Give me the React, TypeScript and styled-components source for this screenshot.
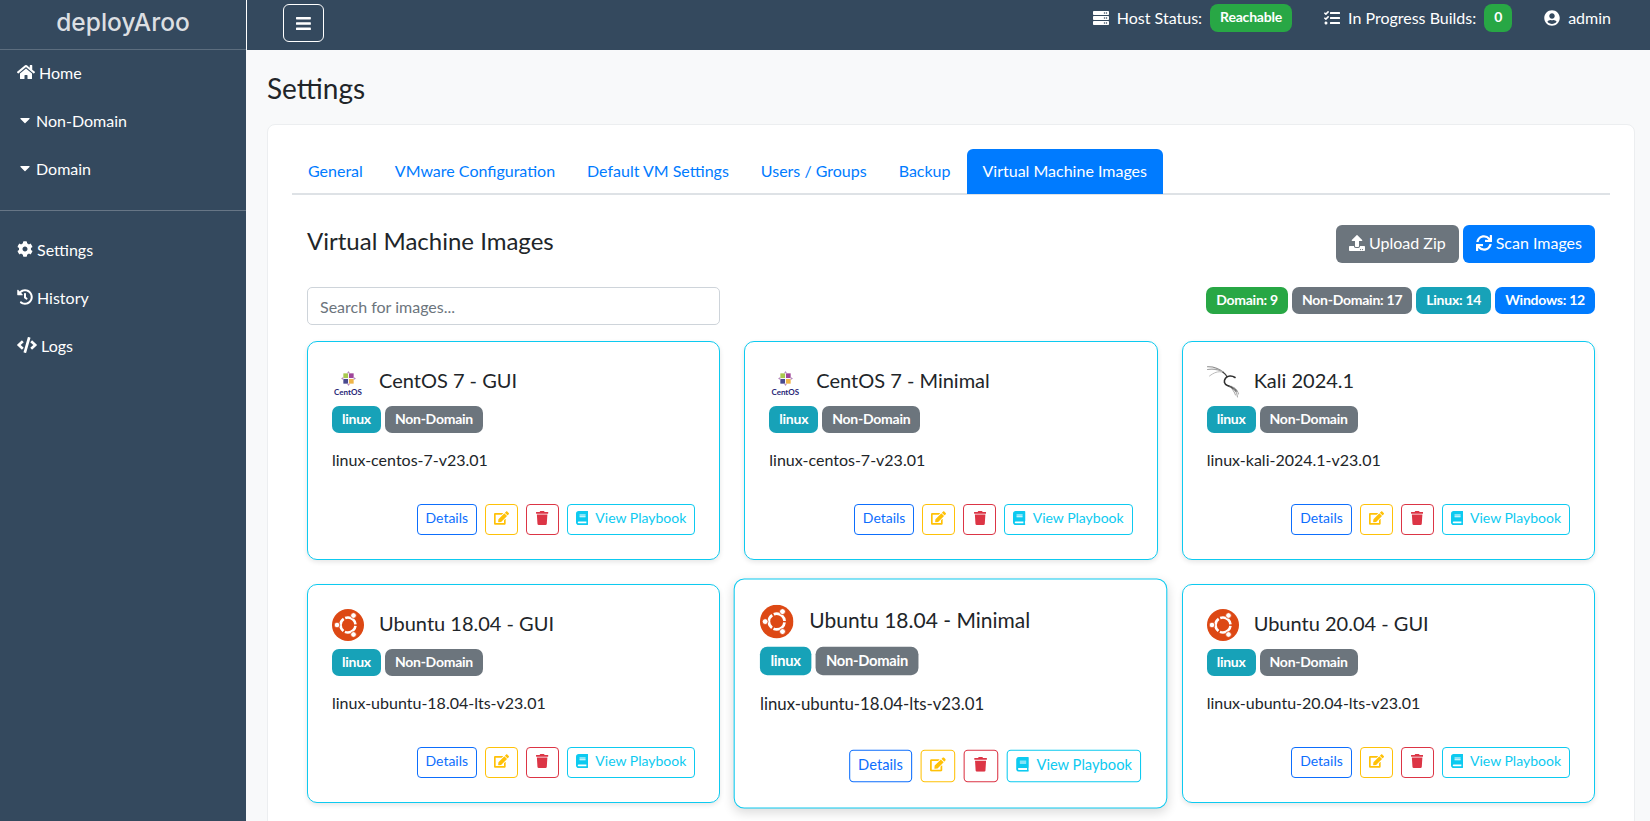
import React from 'react'
import styled, { createGlobalStyle } from 'styled-components'
import {
  FaBars,
  FaBook,
  FaCaretDown,
  FaCode,
  FaCog,
  FaEdit,
  FaHistory,
  FaHome,
  FaServer,
  FaSync,
  FaTasks,
  FaTrash,
  FaUpload,
  FaUserCircle
} from 'react-icons/fa'

type Tone = 'success' | 'secondary' | 'info' | 'primary'
type LineTone = 'blue' | 'amber' | 'red' | 'cyan'
type Os = 'centos' | 'kali' | 'ubuntu'

const toneColors: Record<Tone, string> = {
  success: '#28a745',
  secondary: '#6c757d',
  info: '#17a2b8',
  primary: '#007bff'
}

const lineColors: Record<LineTone, string> = {
  blue: '#0d6efd',
  amber: '#ffc107',
  red: '#dc3545',
  cyan: '#0dcaf0'
}

const tabs = ['General', 'VMware Configuration', 'Default VM Settings', 'Users / Groups', 'Backup', 'Virtual Machine Images']

const counts: { label: string; tone: Tone }[] = [
  { label: 'Domain: 9', tone: 'success' },
  { label: 'Non-Domain: 17', tone: 'secondary' },
  { label: 'Linux: 14', tone: 'info' },
  { label: 'Windows: 12', tone: 'primary' }
]

const images: { id: string; title: string; file: string; os: Os; hovered?: boolean }[] = [
  { id: '1', title: 'CentOS 7 - GUI', file: 'linux-centos-7-v23.01', os: 'centos' },
  { id: '2', title: 'CentOS 7 - Minimal', file: 'linux-centos-7-v23.01', os: 'centos' },
  { id: '3', title: 'Kali 2024.1', file: 'linux-kali-2024.1-v23.01', os: 'kali' },
  { id: '4', title: 'Ubuntu 18.04 - GUI', file: 'linux-ubuntu-18.04-lts-v23.01', os: 'ubuntu' },
  { id: '5', title: 'Ubuntu 18.04 - Minimal', file: 'linux-ubuntu-18.04-lts-v23.01', os: 'ubuntu', hovered: true },
  { id: '6', title: 'Ubuntu 20.04 - GUI', file: 'linux-ubuntu-20.04-lts-v23.01', os: 'ubuntu' }
]

const CentosLogo = () => (
  <CentosMark>
    <svg width="15" height="15" viewBox="0 0 16 16">
      <rect x="2.5" y="2.5" width="5" height="5" fill="#a9c94f" />
      <rect x="8.5" y="2.5" width="5" height="5" fill="#a0459a" />
      <rect x="2.5" y="8.5" width="5" height="5" fill="#4a4a8f" />
      <rect x="8.5" y="8.5" width="5" height="5" fill="#efb548" />
      <path d="M8 0l1.6 2.5H6.4zM8 16l-1.6-2.5h3.2zM0 8l2.5-1.6v3.2zM16 8l-2.5 1.6V6.4z" fill="#b78cbd" />
    </svg>
    <CentosName>CentOS</CentosName>
  </CentosMark>
)

const KaliLogo = () => (
  <svg width="32" height="32" viewBox="0 0 32 32" fill="none" strokeLinecap="round">
    <path d="M0.5 0.8C7 0.6 12 2.5 16.5 6.5" stroke="#8a8a8a" strokeWidth="1.1" />
    <path d="M0.5 3.5C7 2.5 12 3.5 16.5 6.5" stroke="#a5a5a5" strokeWidth="1.1" />
    <path d="M2.5 10C7 6.5 11 5 15.5 6" stroke="#bcbcbc" strokeWidth="1" />
    <path d="M16 6.2C18 7.5 19.5 9.5 20 11" stroke="#3f3f3f" strokeWidth="1.3" />
    <path d="M28 11.5C25 9.3 20.5 9.5 18.5 12.2C16.5 15 17 18 20.5 19.5C24.5 21 27.5 22.5 29 25" stroke="#2f2f2f" strokeWidth="1.6" />
    <path d="M25 20.5C28 23 30 26.5 30.5 31M27 21.5C29.5 23 31 25.5 31.5 28M23 20.5C26 24 27.5 26 28.5 29" stroke="#999" strokeWidth="0.9" />
  </svg>
)

const UbuntuLogo = () => (
  <svg width="32" height="32" viewBox="0 0 32 32">
    <circle cx="16" cy="16" r="16" fill="#dd4814" />
    <circle cx="16" cy="16" r="7.5" fill="none" stroke="#fff" strokeWidth="2.6" strokeDasharray="14 1.7" strokeDashoffset="-0.85" />
    <circle cx="5" cy="16" r="2.8" fill="#fff" stroke="#dd4814" strokeWidth="0.8" />
    <circle cx="21.5" cy="6.5" r="2.8" fill="#fff" stroke="#dd4814" strokeWidth="0.8" />
    <circle cx="21.5" cy="25.5" r="2.8" fill="#fff" stroke="#dd4814" strokeWidth="0.8" />
  </svg>
)

const osLogos: Record<Os, React.ReactNode> = {
  centos: <CentosLogo />,
  kali: <KaliLogo />,
  ubuntu: <UbuntuLogo />
}

const App: React.FC = () => {
  return (
    <Shell>
      <GlobalStyle />
      <Sidebar>
        <Brand>deployAroo</Brand>
        <NavList>
          <NavItem><HomeIcon />Home</NavItem>
          <NavItem $group><CaretIcon />Non-Domain</NavItem>
          <NavItem $group><CaretIcon />Domain</NavItem>
        </NavList>
        <NavDivider />
        <NavList>
          <NavItem><FaCog />Settings</NavItem>
          <NavItem><FaHistory />History</NavItem>
          <NavItem><CodeIcon />Logs</NavItem>
        </NavList>
      </Sidebar>
      <Main>
        <Topbar>
          <MenuButton aria-label="Toggle sidebar"><BarsIcon /></MenuButton>
          <TopStatus>
            <StatusItem>
              <FaServer />
              <StatusLabel>Host Status:</StatusLabel>
              <StatusPill>Reachable</StatusPill>
            </StatusItem>
            <StatusItem>
              <FaTasks />
              <StatusLabel>In Progress Builds:</StatusLabel>
              <StatusPill>0</StatusPill>
            </StatusItem>
            <StatusItem>
              <FaUserCircle />
              <StatusLabel>admin</StatusLabel>
            </StatusItem>
          </TopStatus>
        </Topbar>
        <Content>
          <PageTitle>Settings</PageTitle>
          <Panel>
            <TabBar>
              {tabs.map((tab) => (
                <Tab key={tab} $active={tab === 'Virtual Machine Images'}>{tab}</Tab>
              ))}
            </TabBar>
            <TabBody>
              <SectionHeader>
                <SectionTitle>Virtual Machine Images</SectionTitle>
                <ButtonRow>
                  <SolidButton $tone="secondary"><FaUpload />Upload Zip</SolidButton>
                  <SolidButton $tone="primary"><FaSync />Scan Images</SolidButton>
                </ButtonRow>
              </SectionHeader>
              <FilterRow>
                <SearchInput placeholder="Search for images..." />
                <CountRow>
                  {counts.map((count) => (
                    <Badge key={count.label} $tone={count.tone}>{count.label}</Badge>
                  ))}
                </CountRow>
              </FilterRow>
              <CardGrid>
                {images.map((image) => (
                  <Card key={image.id} $hovered={image.hovered}>
                    <CardHead>
                      <LogoBox>{osLogos[image.os]}</LogoBox>
                      <CardTitle>{image.title}</CardTitle>
                    </CardHead>
                    <TagRow>
                      <Badge $tone="info">linux</Badge>
                      <Badge $tone="secondary">Non-Domain</Badge>
                    </TagRow>
                    <FileName>{image.file}</FileName>
                    <CardActions>
                      <LineButton $tone="blue">Details</LineButton>
                      <LineButton $tone="amber" aria-label="Edit"><EditIcon /></LineButton>
                      <LineButton $tone="red" aria-label="Delete"><TrashIcon /></LineButton>
                      <LineButton $tone="cyan"><BookIcon />View Playbook</LineButton>
                    </CardActions>
                  </Card>
                ))}
              </CardGrid>
            </TabBody>
          </Panel>
        </Content>
      </Main>
    </Shell>
  )
}

export default App

const GlobalStyle = createGlobalStyle`
  * {
    box-sizing: border-box;
  }
  html, body {
    margin: 0;
    height: 100%;
    overflow: hidden;
  }
  body {
    font-family: Lato, "Liberation Sans", sans-serif;
    font-size: 16px;
    color: #212529;
    background: #f8f9fa;
  }
`

// react-icons renders every glyph 1em square, these keep the font-awesome proportions
const HomeIcon = styled(FaHome)`
  width: 1.125em;
`
const CaretIcon = styled(FaCaretDown)`
  width: 0.625em;
`
const CodeIcon = styled(FaCode)`
  width: 1.25em;
`
const BarsIcon = styled(FaBars)`
  width: 0.875em;
`
const EditIcon = styled(FaEdit)`
  width: 15px;
`
const TrashIcon = styled(FaTrash)`
  width: 0.875em;
`
const BookIcon = styled(FaBook)`
  width: 0.875em;
`

const Shell = styled.div`
  display: flex;
  height: 100vh;
  overflow: hidden;
`

const Sidebar = styled.aside`
  flex: 0 0 246px;
  background: #34495e;
  color: #fff;
`

const Brand = styled.div`
  height: 50px;
  display: flex;
  align-items: center;
  justify-content: center;
  padding-bottom: 6px;
  font-family: Inter, Lato, sans-serif;
  font-size: 24.5px;
  font-weight: 500;
  color: #dcdfe2;
  border-bottom: 1px solid rgba(255, 255, 255, 0.2);
`

const NavList = styled.nav`
  display: flex;
  flex-direction: column;
`

const NavItem = styled.a<{ $group?: boolean }>`
  height: 48px;
  display: flex;
  align-items: center;
  gap: ${(p) => (p.$group ? '6px' : '4px')};
  padding-left: ${(p) => (p.$group ? '20px' : '17px')};
  padding-bottom: 4px;
  color: #fff;
  svg {
    flex: none;
  }
`

const NavDivider = styled.hr`
  margin: 16px 0;
  border: 0;
  border-top: 1px solid rgba(255, 255, 255, 0.25);
`

const Main = styled.div`
  flex: 1;
  min-width: 0;
  display: flex;
  flex-direction: column;
`

const Topbar = styled.header`
  flex: 0 0 50px;
  display: flex;
  align-items: flex-start;
  justify-content: space-between;
  padding: 4px 39px 0 36px;
  background: #34495e;
  border-left: 1px solid #fff;
`

const MenuButton = styled.button`
  width: 41px;
  height: 38px;
  display: flex;
  align-items: center;
  justify-content: center;
  padding: 0;
  color: #fff;
  font-size: 17px;
  background: transparent;
  border: 1px solid #fff;
  border-radius: 6px;
`

const TopStatus = styled.div`
  display: flex;
  align-items: center;
  gap: 32px;
`

const StatusItem = styled.div`
  display: flex;
  align-items: center;
  height: 28px;
  gap: 8px;
  color: #fff;
  svg {
    flex: none;
  }
`

const StatusLabel = styled.span`
  padding-bottom: 2px;
`

const StatusPill = styled.span`
  height: 28px;
  display: flex;
  align-items: center;
  padding: 0 10px 3px;
  font-size: 14px;
  font-weight: 700;
  letter-spacing: -0.2px;
  color: #fff;
  background: #28a745;
  border-radius: 8px;
`

const Content = styled.main`
  flex: 1;
  padding: 0 15px 24px 21px;
`

const PageTitle = styled.h1`
  margin: 20px 0 17px;
  font-size: 28px;
  line-height: 37px;
  font-weight: 400;
`

const Panel = styled.section`
  padding: 24px;
  background: #fff;
  border: 1px solid #eceef0;
  border-radius: 8px;
`

const TabBar = styled.div`
  display: flex;
  height: 46px;
  border-bottom: 2px solid #dee2e6;
`

const Tab = styled.a<{ $active?: boolean }>`
  height: 45px;
  padding: 10px 16px;
  line-height: 23px;
  color: ${(p) => (p.$active ? '#fff' : '#007bff')};
  background: ${(p) => (p.$active ? '#007bff' : 'transparent')};
  border-radius: 6px 6px 0 0;
`

const TabBody = styled.div`
  padding: 30px 15px 0;
`

const SectionHeader = styled.div`
  display: flex;
  align-items: center;
  justify-content: space-between;
`

const SectionTitle = styled.h2`
  margin: 0;
  padding-bottom: 6px;
  font-size: 24px;
  line-height: 32px;
  font-weight: 400;
`

const ButtonRow = styled.div`
  display: flex;
  gap: 4px;
`

const SolidButton = styled.button<{ $tone: Tone }>`
  height: 38px;
  display: flex;
  align-items: center;
  gap: 4px;
  padding: 0 13px 3px;
  font: inherit;
  color: #fff;
  background: ${(p) => toneColors[p.$tone]};
  border: 0;
  border-radius: 6px;
`

const FilterRow = styled.div`
  display: flex;
  align-items: flex-start;
  justify-content: space-between;
  margin-top: 24px;
`

const SearchInput = styled.input`
  width: 413px;
  height: 38px;
  padding: 6px 12px;
  font: inherit;
  color: #495057;
  background: #fff;
  border: 1px solid #ced4da;
  border-radius: 5px;
  &::placeholder {
    color: #6c757d;
    opacity: 1;
  }
`

const CountRow = styled.div`
  display: flex;
  gap: 4px;
`

const Badge = styled.span<{ $tone: Tone }>`
  height: 27px;
  display: inline-flex;
  align-items: center;
  padding: 0 10px 3px;
  font-size: 14px;
  font-weight: 700;
  letter-spacing: -0.25px;
  color: #fff;
  background: ${(p) => toneColors[p.$tone]};
  border-radius: 7px;
`

const CardGrid = styled.div`
  display: grid;
  grid-template-columns: repeat(3, 1fr);
  gap: 24px;
  margin-top: 16px;
`

const Card = styled.article<{ $hovered?: boolean }>`
  height: 219px;
  padding: 24px;
  background: #fff;
  border: 1px solid #0dcaf0;
  border-radius: 10px;
  box-shadow: ${(p) => (p.$hovered ? '0 4px 10px rgba(0, 0, 0, 0.14)' : '0 2px 5px rgba(0, 0, 0, 0.1)')};
  transform: ${(p) => (p.$hovered ? 'scale(1.05)' : 'none')};
`

const CardHead = styled.div`
  display: flex;
  align-items: center;
  gap: 15px;
  height: 32px;
`

const LogoBox = styled.div`
  flex: 0 0 32px;
  height: 32px;
  svg {
    display: block;
  }
`

const CentosMark = styled.div`
  display: flex;
  flex-direction: column;
  align-items: center;
  padding-top: 5px;
`

const CentosName = styled.span`
  margin-top: 2px;
  font-size: 8px;
  line-height: 8px;
  font-weight: 700;
  color: #262577;
`

const CardTitle = styled.h5`
  margin: 0 0 4px;
  font-size: 20px;
  font-weight: 400;
`

const TagRow = styled.div`
  display: flex;
  gap: 4px;
  margin-top: 8px;
`

const FileName = styled.p`
  margin: 15px 0 32px;
  line-height: 24px;
`

const CardActions = styled.div`
  display: flex;
  justify-content: flex-end;
  gap: 8px;
`

const LineButton = styled.button<{ $tone: LineTone }>`
  height: 31px;
  min-width: 33px;
  display: flex;
  align-items: center;
  justify-content: center;
  gap: 7px;
  padding: 0 8px 4px;
  font: inherit;
  font-size: 14px;
  color: ${(p) => lineColors[p.$tone]};
  background: transparent;
  border: 1px solid ${(p) => lineColors[p.$tone]};
  border-radius: 4px;
  svg {
    flex: none;
  }
`
